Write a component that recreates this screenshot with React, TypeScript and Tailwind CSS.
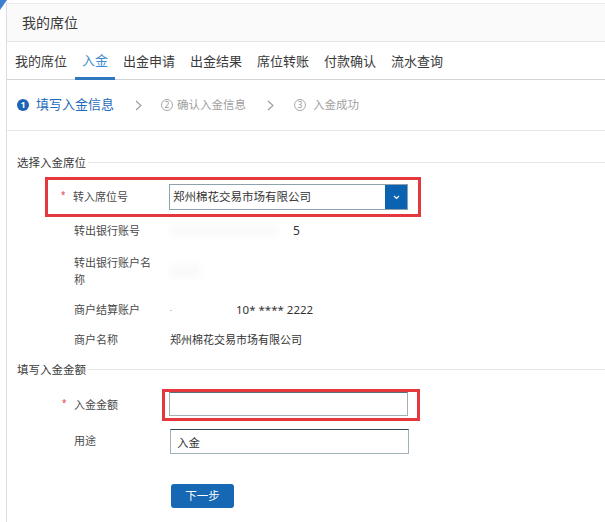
import React from "react";

function Chevron() {
  return (
    <svg width="7" height="11" viewBox="0 0 7 11" className="shrink-0">
      <polyline points="1,1 6,5.5 1,10" fill="none" stroke="#9a9a9a" strokeWidth="1.1" />
    </svg>
  );
}

function CircleNum({ n, active }: { n: string; active?: boolean }) {
  if (active) {
    return (
      <span className="w-[12px] h-[12px] rounded-full bg-[#1c64b4] text-white text-[9px] leading-[12px] flex items-center justify-center font-bold shrink-0">
        {n}
      </span>
    );
  }
  return (
    <span className="w-[12px] h-[12px] rounded-full border border-[#a8a8a8] text-[#9a9a9a] text-[8.5px] flex items-center justify-center shrink-0">
      {n}
    </span>
  );
}

const tabs = ["我的席位", "入金", "出金申请", "出金结果", "席位转账", "付款确认", "流水查询"];

function SectionTitle({ text, h }: { text: string; h: string }) {
  return (
    <div className={`flex items-center pl-[10px] ${h}`}>
      <span className="text-[11.5px] text-[#3a3a3a] leading-none shrink-0">{text}</span>
      <div className="flex-1 h-px bg-[#e8e8e8] ml-[2px] -mt-[1px]" />
    </div>
  );
}

function Asterisk({ show }: { show?: boolean }) {
  return (
    <span className="w-[16px] shrink-0 text-[#e0353b] text-[8px] leading-none pl-[4px] -mt-[4px]">
      {show ? "*" : ""}
    </span>
  );
}

export default function App() {
  return (
    <div className="relative w-[605px] h-[522px] bg-white overflow-hidden font-['Noto_Sans','Noto_Sans_CJK_SC',sans-serif]">
      <svg width="8" height="11" viewBox="0 0 8 11" className="absolute left-0 top-0">
        <polygon points="0,0 7,0 0,10" fill="#3f7fd0" />
      </svg>
      <div className="ml-[6px] mt-[3px] border-l border-t border-l-[#dedede] border-t-[#ececec] h-[519px]">
        {/* header */}
        <div className="h-[38px] bg-[#fafafa] border-b border-[#e6e6e6] flex items-center pl-[15px]">
          <span className="text-[14px] text-[#3a3a3a]">我的席位</span>
        </div>
        {/* tabs */}
        <div className="h-[38px] border-b border-[#cfd4d8] flex items-stretch pl-[1px] gap-[1px]">
          {tabs.map((t) => (
            <div
              key={t}
              className={
                t === "入金"
                  ? "px-[7px] flex items-center pt-[3px] text-[13px] text-[#3d8bd0] border-b-[3px] border-[#2f78c0] -mb-px"
                  : "px-[7px] flex items-center pt-[3px] text-[13px] text-[#3a3a3a]"
              }
            >
              {t}
            </div>
          ))}
        </div>
        {/* steps */}
        <div className="h-[51px] border-b border-[#e8e8e8] flex items-center pl-[10px]">
          <CircleNum n="1" active />
          <span className="ml-[7px] text-[13px] text-[#1f6cbd]">填写入金信息</span>
          <span className="ml-[21px]">
            <Chevron />
          </span>
          <span className="ml-[19px]">
            <CircleNum n="2" />
          </span>
          <span className="ml-[4px] text-[11.5px] text-[#a0a0a0]">确认入金信息</span>
          <span className="ml-[21px]">
            <Chevron />
          </span>
          <span className="ml-[20px]">
            <CircleNum n="3" />
          </span>
          <span className="ml-[7px] text-[11.5px] text-[#a0a0a0]">入金成功</span>
        </div>

        {/* section 1 */}
        <div className="mt-[24px]">
          <SectionTitle text="选择入金席位" h="h-[16px]" />
        </div>

        {/* row: select, red highlighted */}
        <div className="mt-[6px] ml-[38px] w-[376px] h-[40px] border-[3px] border-[#e4383e] flex items-center pl-[9px]">
          <Asterisk show />
          <span className="w-[96px] shrink-0 text-[11px] text-[#4a4a4a]">转入席位号</span>
          <div className="w-[239px] h-[26px] border border-[#8ea2ae] bg-white flex items-stretch">
            <span className="flex-1 flex items-center pl-[3px] text-[11.5px] text-[#333]">
              郑州棉花交易市场有限公司
            </span>
            <span className="w-[22px] bg-[#0b62b1] flex items-center justify-center">
              <svg width="7" height="5" viewBox="0 0 7 5">
                <polyline points="1,1 3.5,3.5 6,1" fill="none" stroke="#ffffff" strokeWidth="1.2" />
              </svg>
            </span>
          </div>
        </div>

        {/* row 2 */}
        <div className="h-[28px] flex items-center pl-[51px]">
          <Asterisk />
          <span className="w-[96px] shrink-0 text-[11px] text-[#4a4a4a]">转出银行账号</span>
          <span className="w-[108px] h-[12px] bg-[#fafafa] blur-[2px] mr-[15px]" />
          <span className="text-[12px] text-[#333]">5</span>
        </div>

        {/* row 3 */}
        <div className="h-[52px] flex items-center pl-[51px]">
          <Asterisk />
          <span className="w-[96px] shrink-0">
            <span className="block w-[84px] text-[11px] leading-[17px] text-[#4a4a4a]">转出银行账户名称</span>
          </span>
          <span className="w-[30px] h-[14px] bg-[#fafafa] blur-[2px]" />
        </div>

        {/* row 4 */}
        <div className="h-[26px] flex items-center pl-[51px]">
          <Asterisk />
          <span className="w-[96px] shrink-0 text-[11px] text-[#4a4a4a]">商户结算账户</span>
          <span className="w-[2px] h-[1px] bg-[#ccc] mr-[64px]" />
          <span className="text-[11.5px] text-[#333]">10* **** 2222</span>
        </div>

        {/* row 5 */}
        <div className="h-[34px] flex items-center pl-[51px]">
          <Asterisk />
          <span className="w-[96px] shrink-0 text-[11px] text-[#4a4a4a]">商户名称</span>
          <span className="text-[11px] text-[#333]">郑州棉花交易市场有限公司</span>
        </div>

        {/* section 2 */}
        <SectionTitle text="填写入金金额" h="h-[26px]" />

        {/* amount row */}
        <div className="mt-[6px] h-[32px] flex items-center pl-[51px]">
          <Asterisk show />
          <span className="w-[88px] shrink-0 text-[11px] text-[#4a4a4a]">入金金额</span>
          <div className="h-[32px] border-[3px] border-[#e4383e] pl-[4px] pr-[9px] flex items-start">
            <input
              className="w-[239px] h-[24px] border border-[#9fb0b8] border-t-[#5b6f7c] bg-white outline-none"
              defaultValue=""
            />
          </div>
        </div>

        {/* purpose row */}
        <div className="mt-[8px] h-[25px] flex items-center pl-[51px]">
          <Asterisk />
          <span className="w-[96px] shrink-0 text-[11px] text-[#4a4a4a]">用途</span>
          <input
            className="w-[239px] h-[25px] border border-[#9fb0b8] border-t-[#34495a] bg-white outline-none px-[6px] text-[11.5px] text-[#333] font-['Noto_Sans','Noto_Sans_CJK_SC',sans-serif]"
            defaultValue="入金"
          />
        </div>

        {/* button */}
        <div className="mt-[30px] pl-[164px]">
          <button className="w-[63px] h-[24px] rounded-[3px] bg-[#1667b4] text-white text-[11.5px] flex items-center justify-center">
            下一步
          </button>
        </div>
      </div>
    </div>
  );
}
